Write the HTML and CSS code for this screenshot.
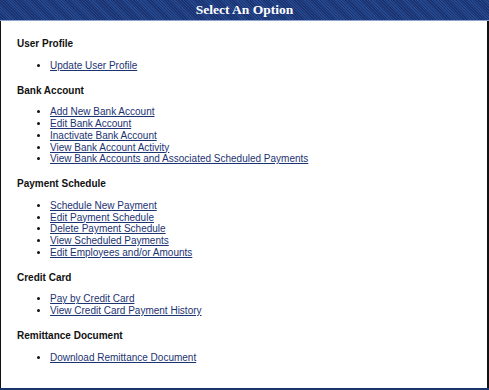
FILE: index.html
```html
<!DOCTYPE html>
<html lang="en">
<head>
    <meta charset="UTF-8">
    <title>Select An Option</title>
    <link rel="stylesheet" href="styles.css">
</head>
<body>
<section id="panel">
    <header class="panel-title">Select An Option</header>
    <section class="panel-body">
        <h4>User Profile</h4>
        <ul>
            <li><a href="#">Update User Profile</a></li>
        </ul>

        <h4>Bank Account</h4>
        <ul>
            <li><a href="#">Add New Bank Account</a></li>
            <li><a href="#">Edit Bank Account</a></li>
            <li><a href="#">Inactivate Bank Account</a></li>
            <li><a href="#">View Bank Account Activity</a></li>
            <li><a href="#">View Bank Accounts and Associated Scheduled Payments</a></li>
        </ul>

        <h4>Payment Schedule</h4>
        <ul>
            <li><a href="#">Schedule New Payment</a></li>
            <li><a href="#">Edit Payment Schedule</a></li>
            <li><a href="#">Delete Payment Schedule</a></li>
            <li><a href="#">View Scheduled Payments</a></li>
            <li><a href="#">Edit Employees and/or Amounts</a></li>
        </ul>

        <h4>Credit Card</h4>
        <ul>
            <li><a href="#">Pay by Credit Card</a></li>
            <li><a href="#">View Credit Card Payment History</a></li>
        </ul>

        <h4>Remittance Document</h4>
        <ul>
            <li><a href="#">Download Remittance Document</a></li>
        </ul>
    </section>
</section>
</body>
</html>
```

FILE: styles.css
```css
body {
    margin: 0;
    font-family: "Liberation Sans", Arial, sans-serif;
    font-size: 10px;
    line-height: 11.75px;
    color: #111;
    background: #fff;
}

#panel {
    width: 489px;
    height: 390px;
    box-sizing: border-box;
    display: flex;
    flex-direction: column;
    border-bottom: 2px solid #173569;
}

.panel-title {
    height: 20px;
    line-height: 20px;
    border-bottom: 1px solid #8ea3cc;
    background-color: #26488f;
    background-image: repeating-linear-gradient(45deg, rgba(0, 0, 40, 0.3) 0 1px, transparent 1px 2px);
    color: #fff;
    text-align: center;
    font-family: "Liberation Serif", "Times New Roman", serif;
    font-weight: bold;
    font-size: 13.5px;
}

.panel-body {
    flex: 1;
    padding: 17px 0 0 16px;
    border-left: 1px solid #111;
    border-right: 2px solid #111;
}

h4 {
    margin: 0 0 10px;
    font-size: 10px;
    font-weight: bold;
}

ul {
    margin: 0 0 13px;
    padding-left: 33px;
}

a {
    color: #1c3372;
}
```
